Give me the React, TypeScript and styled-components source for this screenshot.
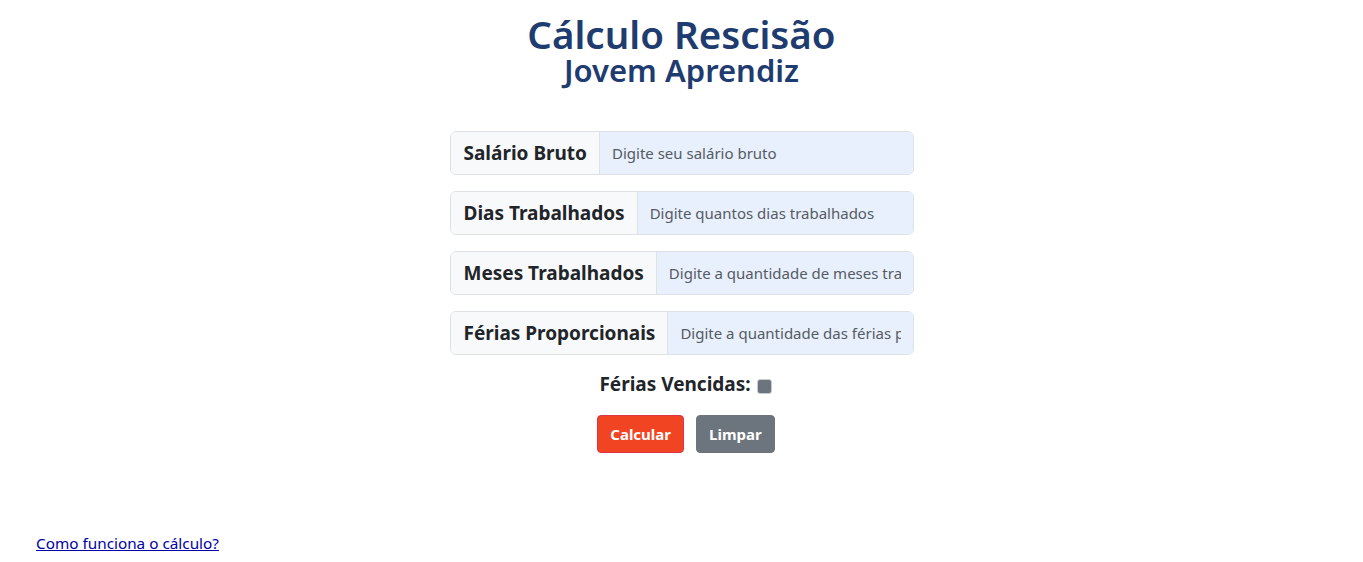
import React from "react";
import styled, { createGlobalStyle } from "styled-components";

const Global = createGlobalStyle`
  html, body { margin: 0; padding: 0; background: #fff; }
  body { font-family: "Noto Sans", "Liberation Sans", sans-serif; color: #212529; }
  * { box-sizing: border-box; }
`;

const Page = styled.div`
  width: 1363px;
  height: 562px;
  display: flex;
  flex-direction: column;
  align-items: center;
  padding-top: 14px;
  position: relative;
`;

const Title = styled.h1`
  margin: 0;
  font-size: 38.5px;
  font-weight: 600;
  color: #1f3c70;
  line-height: 40px;
  text-align: center;
`;

const Subtitle = styled.h2`
  margin: 1px 0 0;
  font-size: 31px;
  font-weight: 600;
  color: #1f3c70;
  line-height: 30px;
  text-align: center;
`;

const Form = styled.form`
  margin-top: 46px;
  width: 464px;
  display: flex;
  flex-direction: column;
  align-items: center;
  gap: 16px;
`;

const Group = styled.div`
  width: 100%;
  height: 44px;
  display: flex;
  border: 1px solid #dee2e6;
  border-radius: 6px;
  overflow: hidden;
`;

const Label = styled.label`
  flex: none;
  display: flex;
  align-items: center;
  padding: 0 12px 0 13px;
  background: #f8f9fa;
  border-right: 1px solid #dee2e6;
  font-size: 19px;
  font-weight: 700;
  color: #212529;
  white-space: nowrap;
`;

const Input = styled.input`
  flex: 1;
  min-width: 0;
  border: none;
  outline: none;
  background: #e8f0fe;
  padding: 0 12px;
  font-family: inherit;
  font-size: 15px;
  color: #212529;
  &::placeholder { color: #555b61; }
`;

const CheckRow = styled.div`
  display: flex;
  align-items: center;
  gap: 6px;
  margin-top: 0px;
  padding-left: 8px;
  font-size: 19px;
  font-weight: 700;
  color: #212529;
`;

const Check = styled.span`
  width: 15px;
  height: 15px;
  background: #6c757d;
  border: 1px solid #c8ccd0;
  border-radius: 3px;
  margin-top: 5px;
`;

const Buttons = styled.div`
  display: flex;
  gap: 12px;
  margin-top: 2px;
  padding-left: 9px;
`;

const Button = styled.button<{ $variant: "danger" | "secondary" }>`
  height: 38px;
  padding: 0 12px;
  border-radius: 4px;
  border: 1px solid ${(p) => (p.$variant === "danger" ? "#dc3545" : "#6c757d")};
  background: ${(p) => (p.$variant === "danger" ? "#f04423" : "#6c757d")};
  color: #fff;
  font-family: inherit;
  font-size: 15px;
  font-weight: 700;
`;

const Link = styled.a`
  position: absolute;
  left: 36px;
  top: 533px;
  font-size: 15.3px;
  color: #0000aa;
  text-decoration: underline;
`;

export default function App() {
  return (
    <>
      <Global />
      <Page>
        <Title>Cálculo Rescisão</Title>
        <Subtitle>Jovem Aprendiz</Subtitle>
        <Form>
          <Group>
            <Label>Salário Bruto</Label>
            <Input placeholder="Digite seu salário bruto" />
          </Group>
          <Group>
            <Label>Dias Trabalhados</Label>
            <Input placeholder="Digite quantos dias trabalhados" />
          </Group>
          <Group>
            <Label>Meses Trabalhados</Label>
            <Input placeholder="Digite a quantidade de meses trabalhados" />
          </Group>
          <Group>
            <Label>Férias Proporcionais</Label>
            <Input placeholder="Digite a quantidade das férias proporcionais" />
          </Group>
          <CheckRow>
            Férias Vencidas:
            <Check />
          </CheckRow>
          <Buttons>
            <Button type="button" $variant="danger">Calcular</Button>
            <Button type="button" $variant="secondary">Limpar</Button>
          </Buttons>
        </Form>
        <Link href="#">Como funciona o cálculo?</Link>
      </Page>
    </>
  );
}
